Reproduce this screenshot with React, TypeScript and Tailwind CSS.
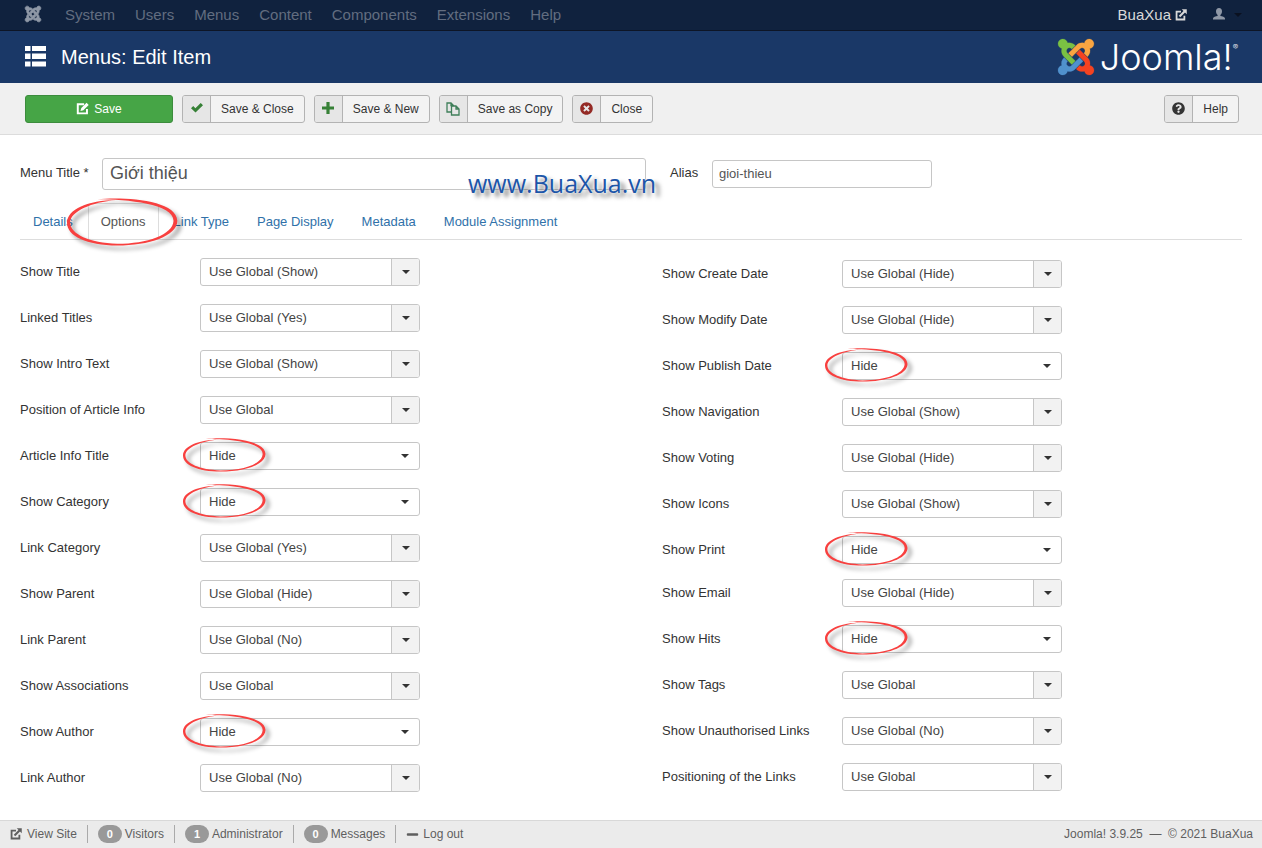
import React from "react";
import { FaJoomla, FaTimesCircle, FaQuestionCircle, FaMinus } from "react-icons/fa";

const menus = ["System", "Users", "Menus", "Content", "Components", "Extensions", "Help"];
const tabs = ["Details", "Options", "Link Type", "Page Display", "Metadata", "Module Assignment"];

type Field = { label: string; value: string };

const leftFields: Field[] = [
  { label: "Show Title", value: "Use Global (Show)" },
  { label: "Linked Titles", value: "Use Global (Yes)" },
  { label: "Show Intro Text", value: "Use Global (Show)" },
  { label: "Position of Article Info", value: "Use Global" },
  { label: "Article Info Title", value: "Hide" },
  { label: "Show Category", value: "Hide" },
  { label: "Link Category", value: "Use Global (Yes)" },
  { label: "Show Parent", value: "Use Global (Hide)" },
  { label: "Link Parent", value: "Use Global (No)" },
  { label: "Show Associations", value: "Use Global" },
  { label: "Show Author", value: "Hide" },
  { label: "Link Author", value: "Use Global (No)" },
];

const rightTop: Field[] = [
  { label: "Show Create Date", value: "Use Global (Hide)" },
  { label: "Show Modify Date", value: "Use Global (Hide)" },
  { label: "Show Publish Date", value: "Hide" },
  { label: "Show Navigation", value: "Use Global (Show)" },
  { label: "Show Voting", value: "Use Global (Hide)" },
  { label: "Show Icons", value: "Use Global (Show)" },
  { label: "Show Print", value: "Hide" },
];

const rightBottom: Field[] = [
  { label: "Show Email", value: "Use Global (Hide)" },
  { label: "Show Hits", value: "Hide" },
  { label: "Show Tags", value: "Use Global" },
  { label: "Show Unauthorised Links", value: "Use Global (No)" },
  { label: "Positioning of the Links", value: "Use Global" },
];

function Ring({ className }: { className: string }) {
  return (
    <svg
      viewBox="0 0 84 36"
      preserveAspectRatio="none"
      aria-hidden="true"
      className={`pointer-events-none absolute z-10 overflow-visible drop-shadow-[4px_4px_2px_rgba(0,0,0,0.4)] ${className}`}
    >
      <path
        fill="#f8403f"
        d="M23 .9 C44 -1 83 1.500 83.500 17 C83.500 28.500 62 35.600 38 35.600 C15 35.400 0 28.500 0 18.500 C0 8.500 16 1.800 37 1.500 C19 3.200 2.600 9.800 2.400 18.300 C2.400 27 17 33.600 38 34.300 C61 34.300 80 27.500 80.600 17.200 C81 4.500 46 .9 23 .9 Z"
      />
    </svg>
  );
}

function SelectField({ label, value }: Field) {
  const id = label.toLowerCase().replace(/ /g, "-");
  const hidden = value === "Hide";
  return (
    <div className="flex">
      <label htmlFor={id} className="w-[180px] pt-[5px] leading-[18px]">
        {label}
      </label>
      <div className="relative w-[220px]">
        <select
          id={id}
          defaultValue={value}
          className="block h-7 w-full appearance-none rounded-[3px] border border-[#c6c6c6] bg-white pr-8 pl-2 text-[#444]"
        >
          <option>{value}</option>
        </select>
        <span
          className={
            hidden
              ? "pointer-events-none absolute inset-y-px right-px flex w-7 items-center justify-center"
              : "pointer-events-none absolute inset-y-px right-px flex w-7 items-center justify-center rounded-r-[2px] border-l border-[#c6c6c6] bg-[#f2f2f2]"
          }
        >
          <svg viewBox="0 0 8 4" className="mb-px h-1 w-2" aria-hidden="true">
            <path d="M0 0h8L4 4z" fill="#333" />
          </svg>
        </span>
        {hidden && <Ring className="-top-1 -left-[17px] h-[34px] w-[83px]" />}
      </div>
    </div>
  );
}

function ToolButton({ icon, children }: { icon: React.ReactNode; children: React.ReactNode }) {
  return (
    <button className="flex h-7 items-stretch overflow-hidden rounded-[3px] border border-[#b3b3b3] bg-[#f3f3f3] text-[12px] text-[#333]">
      <span className="flex w-7 items-center justify-center border-r border-[#b3b3b3] bg-[#e6e6e6]">{icon}</span>
      <span className="px-[10px] leading-[26px]">{children}</span>
    </button>
  );
}

function EditIcon({ className }: { className: string }) {
  return (
    <svg viewBox="0 0 16 16" className={className} fill="none" stroke="currentColor" strokeWidth="2.4" aria-hidden="true">
      <path d="M10 2.700H2.200v11.300h11.300V8.500" />
      <path d="M5.500 11l1-3.600L13 1l2.600 2.600-6.500 6.400z" fill="currentColor" stroke="none" />
    </svg>
  );
}

function ExternalIcon({ className }: { className: string }) {
  return (
    <svg viewBox="0 0 16 16" className={className} fill="none" stroke="currentColor" strokeWidth="2.4" aria-hidden="true">
      <path d="M8 3.500H2.100V14H12.500V9" />
      <path d="M6 10L13 3" strokeWidth="2.800" />
      <path d="M9 .300h6.700V7z" fill="currentColor" stroke="none" />
    </svg>
  );
}

function CheckIcon() {
  return (
    <svg viewBox="0 0 12 10" className="mb-[2px] h-[10px] w-3" aria-hidden="true">
      <path d="M0 5.300L2.200 3.100 4.400 5.200 9.700 0 12 2.200 4.500 9.600z" fill="#378137" />
    </svg>
  );
}

function PlusIcon() {
  return (
    <svg viewBox="0 0 12 12" className="mb-px size-3" aria-hidden="true">
      <path d="M4.400 0h3.200v4.400H12v3.200H7.600V12H4.400V7.600H0V4.400h4.400z" fill="#378137" />
    </svg>
  );
}

function CopyIcon() {
  return (
    <svg viewBox="0 0 14 14" className="size-[14px]" fill="none" stroke="#3f7f5a" strokeWidth="1.3" aria-hidden="true">
      <path d="M5 10H1V1h4l2.500 2.500V4M5 1v2.500h2.500" />
      <path d="M5.500 4h4.500l3 3v6H5.500zM10 4v3h3" />
    </svg>
  );
}

function ListIcon() {
  return (
    <svg viewBox="0 0 21 21" className="mb-[2px] size-[21px]" fill="currentColor" aria-hidden="true">
      <path d="M0 0h5.500v5H0zM7 0h14v5H7zM0 7.500h5.500v5.500H0zM7 7.500h14v5.500H7zM0 15.500h5.500v5H0zM7 15.500h14v5H7z" />
    </svg>
  );
}

function UserIcon() {
  return (
    <svg viewBox="0 0 12 12" className="mb-[2px] size-3" fill="currentColor" aria-hidden="true">
      <path d="M6 0c2 0 3 1.300 3 3.200C9 4.900 8.300 6.200 7.400 6.900v1.200c1.800.4 4.600 1 4.600 2.400V11.500H0V10.500c0-1.400 2.800-2 4.600-2.400V6.900C3.700 6.200 3 4.900 3 3.200 3 1.300 4 0 6 0z" />
    </svg>
  );
}

function JoomlaMark() {
  return (
    <svg viewBox="0 32 448 448" className="size-9 overflow-visible" strokeWidth="3" aria-hidden="true">
      <path
        fill="#7ac143"
        stroke="#7ac143"
        d="M.6 92.1C.6 58.8 27.4 32 60.4 32c30 0 54.5 21.9 59.2 50.2 32.6-7.6 67.1.6 96.500 30l-44.300 44.300c-20.500-20.500-42.600-16.300-55.400-3.500-14.300 14.300-14.300 37.900 0 52.200l99.500 99.500-44 44.300c-87.700-87.200-49.700-49.700-99.800-99.700-26.800-26.500-35-64.800-24.800-98.900C20.400 144.600.6 120.700.6 92.100z"
      />
      <path
        fill="#f9a541"
        stroke="#f9a541"
        d="M130.100 208.500l44.300 44.300c10-10 89.700-89.700 99.700-99.800 14.300-14.300 37.600-14.300 51.900 0 12.800 12.800 17 35-3.500 55.400l44 44.300c31.200-31.200 38.500-67.600 28.900-101.200 29.200-4.100 51.900-29.200 51.900-59.500 0-33.200-26.800-60.100-59.800-60.100-30.300 0-55.400 22.500-59.500 51.600-33.800-9.900-71.700-1.500-98.300 25.100-18.300 19.100-71.100 71.500-99.600 99.900z"
      />
      <path
        fill="#5091cd"
        stroke="#5091cd"
        d="M312.100 307.600l-44-44.300c-87 86.400-50.400 50.400-99.700 99.800-14.300 14.300-37.600 14.300-51.900 0-13.100-13.400-16.900-35.300 3.200-55.400l-44-44.300c-30.200 30.200-38 65.200-29.500 98.300-26.700 6-46.200 29.900-46.200 58.200C0 453.200 26.800 480 59.800 480c28.600 0 52.500-19.800 58.600-46.700 32.700 8.200 68.500-.6 94.200-26 32.100-32 12.200-12.400 99.500-99.700z"
      />
      <path
        fill="#f44321"
        stroke="#f44321"
        d="M396.400 360.700c8.200-32.700-.9-68.500-26.300-93.900-11.800-12.200 5 4.700-99.500-99.700l-44.300 44.300 99.700 99.700c14.300 14.300 14.300 37.600 0 51.900-12.800 12.800-35 17-55.400-3.500l-44 44.300c27.600 30.200 68 38.800 102.700 28 5.500 27.400 29.700 48.100 58.900 48.100 33 0 59.800-26.800 59.800-60.100 0-30.200-22.500-55-51.600-59.100z"
      />
    </svg>
  );
}

function Badge({ children }: { children: React.ReactNode }) {
  return (
    <span className="flex h-[18px] w-6 items-center justify-center rounded-full bg-[#999] text-[11px] font-bold text-white">
      {children}
    </span>
  );
}

export default function App() {
  return (
    <div className="flex min-h-screen flex-col bg-white font-['Liberation_Sans',Arial,sans-serif] text-[13px] text-[#333]">
      <nav className="flex h-[31px] items-center border-b border-[#0d1526] bg-[#10223e] pr-5 pl-6 text-[15px] text-[#626d80]">
        <a href="#home" aria-label="Joomla" className="mb-[2px] text-[#8f98a6]">
          <FaJoomla className="size-[18px] overflow-visible stroke-[#8f98a6] stroke-[20]" />
        </a>
        <div className="ml-[23px] flex gap-5 leading-[30px]">
          {menus.map((m) => (
            <a key={m} href={`#${m}`}>
              {m}
            </a>
          ))}
        </div>
        <a href="#site" className="ml-auto flex items-center gap-1 text-[#d9d9d9]">
          BuaXua <ExternalIcon className="size-3" />
        </a>
        <button aria-label="User menu" className="ml-[26px] flex items-center gap-[9px] text-[#8f98a6]">
          <UserIcon />
          <svg viewBox="0 0 8 4" className="h-1 w-2" aria-hidden="true">
            <path d="M0 0h8L4 4z" fill="#0a1120" />
          </svg>
        </button>
      </nav>

      <header className="flex h-[52px] items-center bg-[#1a3867] pr-6 pl-[25px] text-white">
        <ListIcon />
        <h1 className="ml-[15px] text-[20px]">Menus: Edit Item</h1>
        <div className="ml-auto flex items-center gap-[6px]">
          <JoomlaMark />
          <span className="flex items-start font-['Inter',sans-serif] text-[36px] leading-9 font-light">
            Joomla!<span className="text-[8px] leading-4">®</span>
          </span>
        </div>
      </header>

      <div className="flex h-[52px] items-center gap-[9px] border-b border-[#dcdcdc] bg-[#f0f0f0] pr-[23px] pl-[25px]">
        <button className="flex h-7 w-[148px] items-center justify-center gap-[5px] rounded-[3px] border border-[#3c8c3d] bg-[#46a546] text-[12px] text-white">
          <EditIcon className="size-[13px]" />
          Save
        </button>
        <ToolButton icon={<CheckIcon />}>Save &amp; Close</ToolButton>
        <ToolButton icon={<PlusIcon />}>Save &amp; New</ToolButton>
        <ToolButton icon={<CopyIcon />}>Save as Copy</ToolButton>
        <ToolButton icon={<FaTimesCircle className="size-[13px] text-[#942a25]" />}>Close</ToolButton>
        <div className="ml-auto">
          <ToolButton icon={<FaQuestionCircle className="size-[13px] text-[#333]" />}>Help</ToolButton>
        </div>
      </div>

      <main className="px-5 pt-[23px]">
        <div className="relative flex items-center">
          <label htmlFor="title" className="w-[82px] pb-[2px]">
            Menu Title *
          </label>
          <input
            id="title"
            defaultValue="Giới thiệu"
            className="h-8 w-[544px] rounded-[3px] border border-[#c6c6c6] px-[7px] pb-[2px] text-[18px] text-[#555]"
          />
          <label htmlFor="alias" className="ml-6 w-[42px] pb-[2px]">
            Alias
          </label>
          <input
            id="alias"
            defaultValue="gioi-thieu"
            className="h-7 w-[220px] rounded-[3px] border border-[#c6c6c6] px-[6px] pb-[2px] text-[#555]"
          />
          <span className="pointer-events-none absolute top-2 left-[448px] font-['Open_Sans',sans-serif] text-[25px] leading-[34px] text-[#1c55a8] [text-shadow:0_0_2px_#fff,5px_4px_4px_rgba(0,0,0,0.5)]">
            www.BuaXua.vn
          </span>
        </div>

        <div role="tablist" className="mt-[13px] flex gap-[2px] border-b border-[#ddd]">
          {tabs.map((t) => (
            <button
              key={t}
              role="tab"
              aria-selected={t === "Options"}
              className={
                t === "Options"
                  ? "relative -mb-px h-9 rounded-t border border-b-0 border-[#ddd] bg-white px-3 text-[#555]"
                  : "h-9 px-[13px] pt-[2px] text-[#3071a9]"
              }
            >
              {t}
              {t === "Options" && <Ring className="-top-[6px] -left-[22px] h-12 w-[111px]" />}
            </button>
          ))}
        </div>

        <div className="grid grid-cols-2 gap-x-[62px] pt-[18px] pb-7">
          <div className="flex flex-col gap-[18px]">
            {leftFields.map((f) => (
              <SelectField key={f.label} {...f} />
            ))}
          </div>
          <div className="flex flex-col gap-[15px] pt-[2px]">
            <div className="flex flex-col gap-[18px]">
              {rightTop.map((f) => (
                <SelectField key={f.label} {...f} />
              ))}
            </div>
            <div className="flex flex-col gap-[18px]">
              {rightBottom.map((f) => (
                <SelectField key={f.label} {...f} />
              ))}
            </div>
          </div>
        </div>
      </main>

      <footer className="mt-auto flex h-[29px] items-center border-t border-b border-t-[#d8d8d8] border-b-[#2c3444] bg-[#ebebeb] pr-[9px] pb-px pl-[10px] text-[12px] text-[#5f5f5f]">
        <a href="#view" className="flex items-center gap-[5px] pr-[10px]">
          <ExternalIcon className="size-3" />
          View Site
        </a>
        <span className="flex items-center gap-[3px] border-l border-[#aaa] px-[10px]">
          <Badge>0</Badge>Visitors
        </span>
        <span className="flex items-center gap-[3px] border-l border-[#aaa] px-[10px]">
          <Badge>1</Badge>Administrator
        </span>
        <span className="flex items-center gap-[3px] border-l border-[#aaa] px-[10px]">
          <Badge>0</Badge>Messages
        </span>
        <a href="#logout" className="flex items-center gap-1 border-l border-[#aaa] pl-[10px]">
          <FaMinus className="size-[13px]" />
          Log out
        </a>
        <p className="ml-auto whitespace-pre">Joomla! 3.9.25  —  © 2021 BuaXua</p>
      </footer>
    </div>
  );
}
